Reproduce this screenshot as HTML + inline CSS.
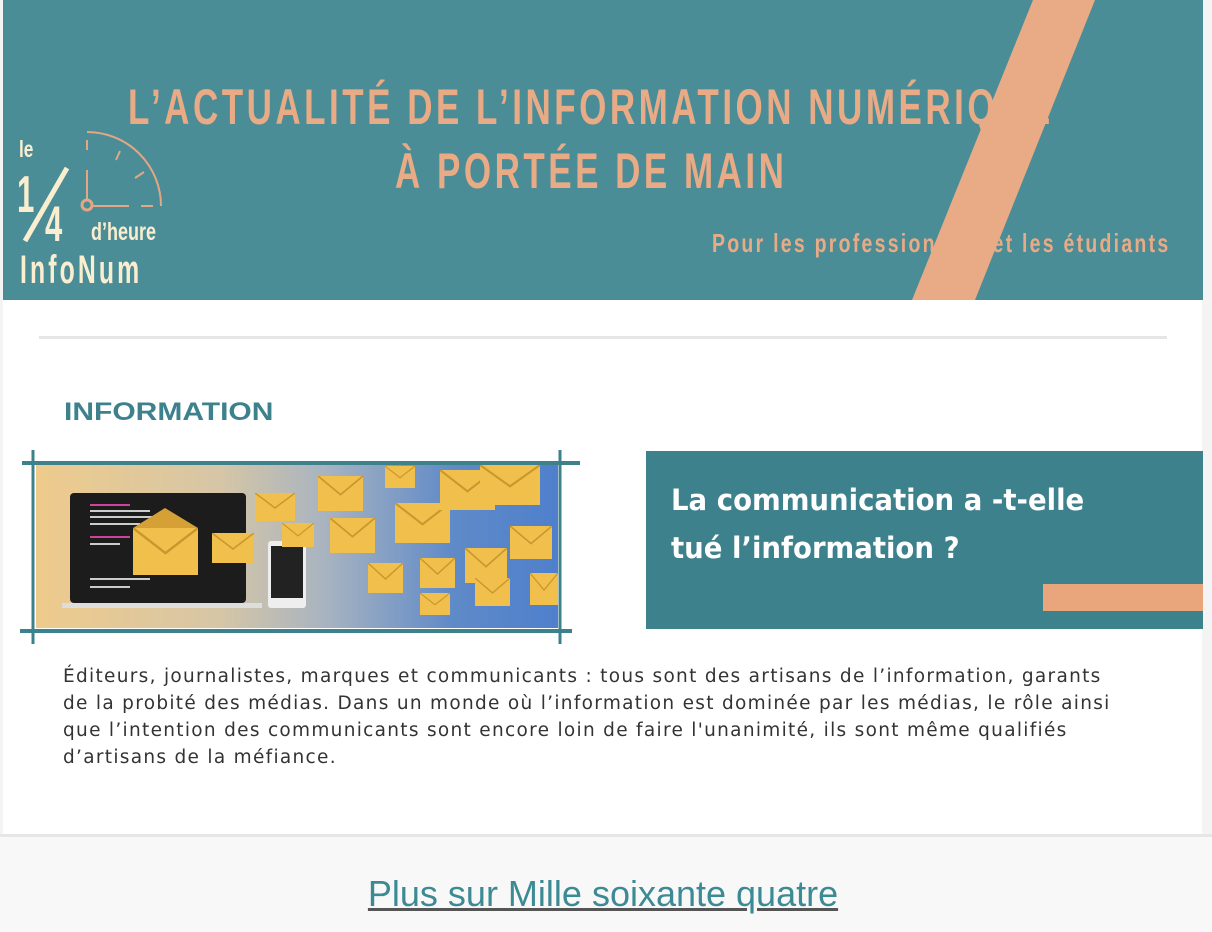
<!DOCTYPE html>
<html><head><meta charset="utf-8">
<style>
*{margin:0;padding:0;box-sizing:border-box}
body{width:1212px;height:932px;overflow:hidden;background:#f4f4f4;font-family:"Liberation Sans",sans-serif;position:relative}
.main{position:absolute;left:3px;top:0;width:1199px;height:834px;background:#fff}
.hdr{position:absolute;left:3px;top:0;width:1200px;height:300px;background:#4a8d96;overflow:hidden}
.t{position:absolute;color:#e9aa86;white-space:nowrap;font-size:50px;font-weight:bold;letter-spacing:5px;transform:scaleX(0.70);transform-origin:left top}
.sep{position:absolute;left:39px;top:336px;width:1128px;height:3px;background:#e6e6e6}
h2{position:absolute;left:64px;top:398px;font-size:25px;color:#3d818c;font-weight:bold;transform:scaleX(1.2);transform-origin:left}
.box{position:absolute;left:646px;top:451px;width:557px;height:178px;background:#3d818c}
.box p{position:absolute;left:25px;top:25px;color:#fff;font-size:29px;font-weight:bold;line-height:48px;font-family:"DejaVu Sans",sans-serif;transform:scaleX(0.95);transform-origin:left;white-space:nowrap}
.bar{position:absolute;left:1043px;top:584px;width:160px;height:27px;background:#e9a57c}
.body{position:absolute;left:63px;top:663px;width:1062px;font-size:18.5px;line-height:27px;color:#333;font-family:"DejaVu Sans",sans-serif;letter-spacing:1.3px}
.foot{position:absolute;left:0;top:834px;width:1212px;height:98px;background:#f8f8f8;border-top:3px solid #e6e6e6}
.foot a{position:absolute;left:0;width:1206px;top:36px;text-align:center;font-size:36px;color:#3c8a93;text-decoration:underline;text-decoration-color:#555}
</style></head><body>
<div class="main"></div>
<div class="hdr">
 <svg width="1200" height="300" style="position:absolute;left:0;top:0">
  <polygon points="1030,0 1092,0 972,300 909,300" fill="#e9aa86"/>
  <g stroke="#e4a784" stroke-width="2" fill="none">
   <path d="M84,132 A74,74 0 0 1 158,206"/>
   <line x1="84" y1="170" x2="84" y2="200"/>
   <line x1="89" y1="206" x2="126" y2="206"/>
   <line x1="138" y1="206" x2="150" y2="206"/>
   <line x1="84" y1="140" x2="84" y2="150"/>
   <line x1="113" y1="160" x2="117" y2="151"/>
   <line x1="132" y1="178" x2="141" y2="172"/>
   <circle cx="84" cy="205" r="5" stroke-width="3"/>
  </g>
  <line x1="22" y1="241" x2="64" y2="168" stroke="#fbeed0" stroke-width="5"/>
  <g fill="#fbeed0" font-family="Liberation Sans" font-weight="bold">
   <text x="16" y="157" font-size="23" transform="translate(16 0) scale(0.75 1) translate(-16 0)">le</text>
   <text x="14" y="212" font-size="52" transform="translate(14 0) scale(0.6 1) translate(-14 0)">1</text>
   <text x="42" y="241" font-size="50" transform="translate(42 0) scale(0.62 1) translate(-42 0)">4</text>
   <text x="88" y="240" font-size="25" transform="translate(88 0) scale(0.72 1) translate(-88 0)">d’heure</text>
   <text x="17" y="283" font-size="40" letter-spacing="5" transform="translate(17 0) scale(0.62 1) translate(-17 0)">InfoNum</text>
  </g>
 </svg>
 <div class="t" style="top:78px;left:125px">L’ACTUALITÉ DE L’INFORMATION NUMÉRIQUE</div>
 <div class="t" style="top:142px;left:392px">À PORTÉE DE MAIN</div>
 <div style="position:absolute;left:709px;top:228px;color:#e9aa86;font-size:26px;white-space:nowrap;transform:scaleX(0.75);transform-origin:left;letter-spacing:3px;font-weight:bold">Pour les professionnels et les étudiants</div>
</div>
<div class="sep"></div>
<h2>INFORMATION</h2>
<svg width="600" height="200" style="position:absolute;left:0;top:448px">
 <defs>
  <linearGradient id="g" x1="0" x2="1"><stop offset="0" stop-color="#eecb8c"/><stop offset="0.35" stop-color="#d6c6a6"/><stop offset="0.55" stop-color="#a9b4c0"/><stop offset="0.8" stop-color="#5f8ac8"/><stop offset="1" stop-color="#4f80cc"/></linearGradient>
  <symbol id="e" viewBox="0 0 40 30" preserveAspectRatio="none"><rect x="0" y="0" width="40" height="30" fill="#f1bf4b"/><polyline points="0,0 20,16 40,0" fill="none" stroke="#c9972e" stroke-width="1.5"/></symbol>
 </defs>
 <rect x="36" y="17" width="522" height="163" fill="url(#g)"/>
 <rect x="70" y="45" width="176" height="110" rx="4" fill="#1d1c1c"/>
 <rect x="62" y="155" width="200" height="5" fill="#ddd"/>
 <g fill="#ccc"><rect x="90" y="56" width="40" height="2" fill="#c49"/><rect x="90" y="62" width="60" height="2"/><rect x="90" y="68" width="70" height="2"/><rect x="90" y="75" width="50" height="2"/><rect x="90" y="88" width="40" height="2" fill="#c49"/><rect x="90" y="95" width="30" height="2"/><rect x="90" y="130" width="60" height="2"/><rect x="90" y="138" width="40" height="2"/></g>
 <rect x="268" y="93" width="38" height="67" rx="3" fill="#eee"/><rect x="271" y="98" width="32" height="52" fill="#222"/>
 <rect x="133" y="80" width="65" height="47" fill="#e6b03e"/><polygon points="133,80 165,60 198,80" fill="#d5a035"/><use href="#e" x="133" y="80" width="65" height="47"/>
 <use href="#e" x="212" y="85" width="42" height="30"/><use href="#e" x="255" y="45" width="40" height="28"/><use href="#e" x="282" y="75" width="32" height="24"/>
 <use href="#e" x="318" y="28" width="45" height="35"/><use href="#e" x="395" y="55" width="55" height="40"/><use href="#e" x="440" y="22" width="55" height="40"/><use href="#e" x="480" y="17" width="60" height="40"/>
 <use href="#e" x="330" y="70" width="45" height="35"/><use href="#e" x="368" y="115" width="35" height="30"/><use href="#e" x="420" y="110" width="35" height="30"/>
 <use href="#e" x="465" y="100" width="42" height="35"/><use href="#e" x="510" y="78" width="42" height="33"/><use href="#e" x="420" y="145" width="30" height="22"/><use href="#e" x="475" y="130" width="35" height="28"/><use href="#e" x="530" y="125" width="28" height="32"/><use href="#e" x="385" y="18" width="30" height="22"/>
 <g stroke="#3d818c" stroke-width="4"><line x1="22" y1="15" x2="580" y2="15"/><line x1="20" y1="183" x2="572" y2="183"/></g>
 <g stroke="#3d818c" stroke-width="3"><line x1="33" y1="2" x2="33" y2="196"/><line x1="560" y1="2" x2="560" y2="196"/></g>
</svg>
<div class="box"><p>La communication a -t-elle<br>tué l’information ?</p></div>
<div class="bar"></div>
<div class="body">Éditeurs, journalistes, marques et communicants : tous sont des artisans de l’information, garants de la probité des médias. Dans un monde où l’information est dominée par les médias, le rôle ainsi que l’intention des communicants sont encore loin de faire l'unanimité, ils sont même qualifiés d’artisans de la méfiance.</div>
<div class="foot"><a>Plus sur Mille soixante quatre</a></div>
</body></html>
